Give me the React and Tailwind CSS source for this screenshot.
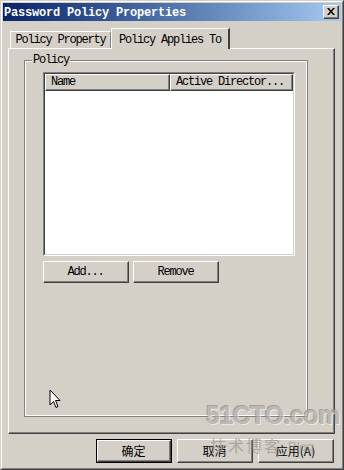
const mono = { fontFamily: '"Liberation Mono", "Noto Sans CJK SC", monospace' };

function RaisedButton({ children, className = '', isDefault = false }) {
  const inner = (
    <div className="h-full border border-t-white border-l-white border-r-[#404040] border-b-[#404040] bg-[#d4d0c8]">
      <div className="h-full flex items-center justify-center border-r border-b border-r-[#808080] border-b-[#808080] text-[12px] tracking-[-1.2px] text-black">
        {children}
      </div>
    </div>
  );
  if (isDefault) {
    return <div className={`border border-black ${className}`}>{inner}</div>;
  }
  return <div className={className}>{inner}</div>;
}

function Cursor() {
  return (
    <svg width="13" height="21" viewBox="0 0 13 21" className="absolute left-[49px] top-[389px]">
      <path d="M1 1 L1 16 L4.5 12.5 L7 18.5 L9 17.5 L6.5 11.5 L11 11.5 Z" fill="white" stroke="black" strokeWidth="1" />
    </svg>
  );
}

function Watermark() {
  return (
    <div className="absolute left-[206px] top-[403px] pointer-events-none select-none">
      <div
        className="text-[25px] font-bold leading-none tracking-[-0.5px] text-[#b3b0a9] opacity-70"
        style={{ fontFamily: '"Liberation Sans", sans-serif', textShadow: '1px 1px 0 #f2f1ee, -1px -1px 0 #8e8b86' }}
      >
        51CTO.com
      </div>
      <div
        className="mt-[9px] ml-[4px] flex items-end gap-[6px] text-[#8f8c86] opacity-60"
        style={{ fontFamily: '"Noto Sans CJK SC", sans-serif' }}
      >
        <span className="text-[16px] leading-none tracking-[2px]">技术博客</span>
        <span className="text-[13px] leading-none" style={{ fontFamily: '"Liberation Sans", sans-serif' }}>Blog</span>
      </div>
    </div>
  );
}

export default function App() {
  return (
    <div className="relative w-[344px] h-[470px] overflow-hidden bg-[#d4d0c8]" style={mono}>
      <div className="h-full border border-t-[#d4d0c8] border-l-[#d4d0c8] border-r-[#404040] border-b-[#404040]">
        <div className="h-full border border-t-white border-l-white border-r-[#808080] border-b-[#808080] p-px flex flex-col">
          {/* title bar */}
          <div className="h-[18px] flex items-center justify-between pl-[1px] pr-[2px] bg-gradient-to-r from-[#0a246a] to-[#a6caf0]">
            <span className="text-white font-bold text-[12px] tracking-[-0.2px] pt-px">Password Policy Properties</span>
            <div className="w-[16px] h-[14px] border border-t-white border-l-white border-r-[#404040] border-b-[#404040] bg-[#d4d0c8]">
              <div className="h-full border-r border-b border-r-[#808080] border-b-[#808080] flex items-center justify-center">
                <svg width="8" height="7" viewBox="0 0 8 7">
                  <path d="M0 0 L2 0 L4 2.5 L6 0 L8 0 L5 3.5 L8 7 L6 7 L4 4.5 L2 7 L0 7 L3 3.5 Z" fill="black" />
                </svg>
              </div>
            </div>
          </div>

          {/* tabs */}
          <div className="mt-[7px] ml-[5px] h-[20px] flex items-end relative z-10">
            <div className="w-[101px] h-[17px] ml-[2px] flex items-center justify-center border-t border-l border-t-white border-l-white border-r border-r-[#808080] text-[12px] tracking-[-1.2px]">
              Policy Property
            </div>
            <div className="w-[119px] h-[21px] -mb-px flex items-start pt-[2px] justify-center border-t border-l border-t-white border-l-white border-r-2 border-r-[#404040] bg-[#d4d0c8] text-[12px] tracking-[-1.2px]">
              Policy Applies To
            </div>
          </div>

          {/* tab panel */}
          <div className="ml-[5px] w-[327px] h-[386px] border border-t-white border-l-white border-r-[#404040] border-b-[#404040]">
            <div className="h-full border-r border-b border-r-[#808080] border-b-[#808080] pt-[11px] pl-[15px]">
              {/* group box */}
              <div className="relative w-[284px] h-[357px] border border-[#808080]">
                <div className="h-full border border-white pt-[10px] pl-[17px]">
                  <div className="absolute -top-[7px] left-[7px] px-[1px] bg-[#d4d0c8] text-[12px] leading-[12px] tracking-[-1.2px]">Policy</div>
                  {/* list view */}
                  <div className="w-[252px] h-[184px] border border-t-[#808080] border-l-[#808080] border-r-white border-b-white">
                    <div className="h-full border border-t-[#404040] border-l-[#404040] border-r-[#d4d0c8] border-b-[#d4d0c8] bg-white flex flex-col">
                      <div className="h-[17px] flex">
                        <div className="w-[125px] h-full border border-t-white border-l-white border-r-[#404040] border-b-[#404040] bg-[#d4d0c8]">
                          <div className="h-full border-r border-b border-r-[#808080] border-b-[#808080] pl-[5px] flex items-center text-[12px] tracking-[-1.2px]">Name</div>
                        </div>
                        <div className="flex-1 h-full border border-t-white border-l-white border-r-[#404040] border-b-[#404040] bg-[#d4d0c8]">
                          <div className="h-full border-r border-b border-r-[#808080] border-b-[#808080] pl-[5px] flex items-center text-[12px] tracking-[-1.2px] whitespace-nowrap">Active Director...</div>
                        </div>
                      </div>
                    </div>
                  </div>
                  <div className="mt-[5px] flex gap-[4px]">
                    <RaisedButton className="w-[86px] h-[22px]">Add...</RaisedButton>
                    <RaisedButton className="w-[86px] h-[22px]">Remove</RaisedButton>
                  </div>
                </div>
              </div>
            </div>
          </div>

          {/* bottom buttons */}
          <div className="mt-[5px] ml-[93px] flex gap-[5px]" style={{ fontFamily: '"Noto Sans CJK SC", sans-serif' }}>
            <RaisedButton isDefault className="w-[76px] h-[24px]"><span className="text-[12px] tracking-normal">确定</span></RaisedButton>
            <RaisedButton className="w-[76px] h-[24px]"><span className="text-[12px] tracking-normal">取消</span></RaisedButton>
            <RaisedButton className="w-[76px] h-[24px]"><span className="text-[12px] tracking-normal">应用(A)</span></RaisedButton>
          </div>
        </div>
      </div>
      <Watermark />
      <Cursor />
    </div>
  );
}
